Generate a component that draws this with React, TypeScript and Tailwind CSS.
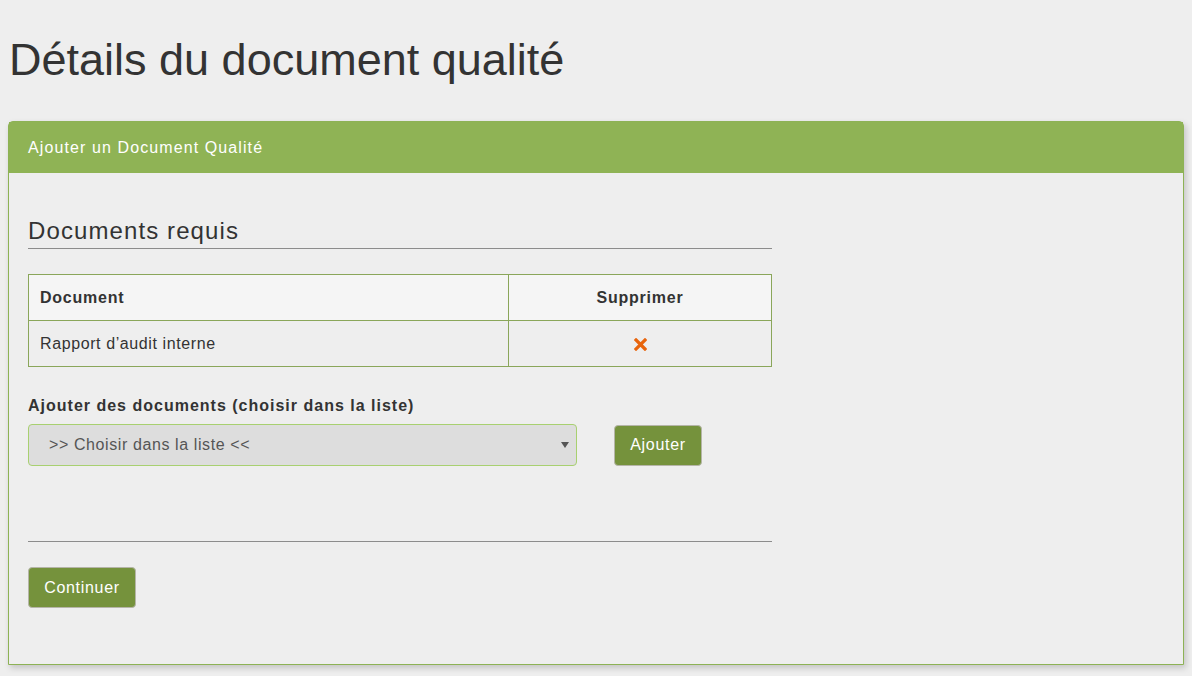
import React from "react";

export default function App() {
  return (
    <div
      className="min-h-[676px] w-full bg-[#eeeeee] text-[#333333]"
      style={{ fontFamily: '"Liberation Sans", Arial, sans-serif' }}
    >
      <div className="px-2 pt-[34px]">
        <h1 className="pl-px text-[45px] leading-[52px] font-normal text-[#333333]">
          Détails du document qualité
        </h1>
        <div className="mt-[35px] rounded-t-[5px] border border-[#8db255] bg-[#eeeeee] shadow-[2px_3px_6px_rgba(0,0,0,0.18)]">
          <div className="flex h-[51px] items-center bg-[#8fb355] px-[19px] text-[16px] tracking-[1.1px] text-white">
            Ajouter un Document Qualité
          </div>
          <div className="px-[19px] pt-[44px] pb-[56px]">
            <div className="w-[744px]">
              <h2 className="border-b border-[#8c8c8c] pb-[3px] text-[24px] leading-[28px] tracking-[1.1px] text-[#333333]">
                Documents requis
              </h2>
              <table className="mt-[25px] w-full border-collapse text-[16px] tracking-[0.6px]">
                <thead>
                  <tr className="bg-[#f5f5f5]">
                    <th className="h-[46px] w-[480px] border border-[#8aa65a] px-[11px] text-left font-bold tracking-[0.75px]">
                      Document
                    </th>
                    <th className="h-[46px] border border-[#8aa65a] text-center font-bold tracking-[0.75px]">
                      Supprimer
                    </th>
                  </tr>
                </thead>
                <tbody>
                  <tr className="bg-[#eeeeee]">
                    <td className="h-[46px] border border-[#8aa65a] px-[11px]">
                      Rapport d’audit interne
                    </td>
                    <td className="h-[46px] border border-[#8aa65a] text-center">
                      <svg
                        width="13"
                        height="13"
                        viewBox="0 0 13 13"
                        className="inline-block align-middle"
                      >
                        <path
                          d="M2 2 L11 11 M11 2 L2 11"
                          stroke="#e8640c"
                          strokeWidth="3.2"
                          strokeLinecap="square"
                        />
                      </svg>
                    </td>
                  </tr>
                </tbody>
              </table>
              <div className="mt-[29px] text-[16px] font-bold leading-[20px] tracking-[1px]">
                Ajouter des documents (choisir dans la liste)
              </div>
              <div className="mt-[8px] flex items-center gap-[37px]">
                <div className="relative flex h-[42px] w-[549px] items-center rounded-[4px] border border-[#a8d070] bg-[#dddddd] pl-[20px] text-[16px] tracking-[0.6px] text-[#555555]">
                  &gt;&gt; Choisir dans la liste &lt;&lt;
                  <svg
                    width="8"
                    height="6"
                    viewBox="0 0 8 6"
                    className="absolute right-[7px] top-[17px]"
                  >
                    <path d="M0 0 L8 0 L4 6 Z" fill="#555555" />
                  </svg>
                </div>
                <button className="flex h-[41px] w-[88px] items-center justify-center rounded-[4px] border border-[#b5b5a8] bg-[#75923c] text-[16px] tracking-[0.7px] text-white">
                  Ajouter
                </button>
              </div>
              <div className="mt-[75px] border-t border-[#8c8c8c]" />
              <button className="mt-[25px] flex h-[41px] w-[108px] items-center justify-center rounded-[4px] border border-[#b5b5a8] bg-[#75923c] text-[16px] tracking-[0.7px] text-white">
                Continuer
              </button>
            </div>
          </div>
        </div>
      </div>
    </div>
  );
}
